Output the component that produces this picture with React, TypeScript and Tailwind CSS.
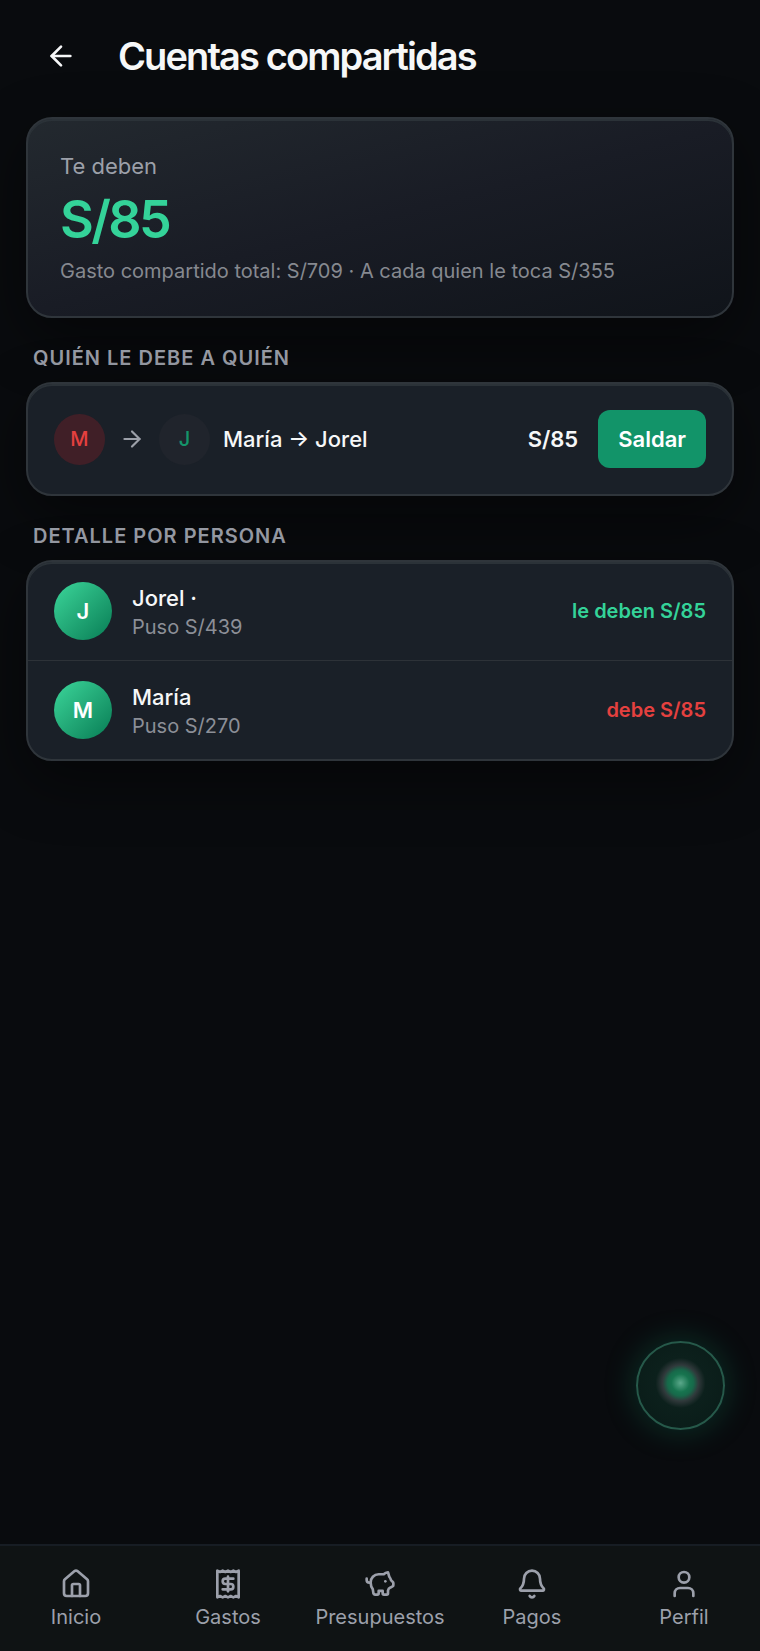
import React from "react";
import { ArrowLeft, ArrowRight, Bell, House, User } from "lucide-react";
import type { LucideIcon } from "lucide-react";

interface Person {
  name: string;
  initial: string;
  paid: string;
  status: string;
  owed: boolean;
}

interface IconProps {
  size?: number;
}

interface NavItem {
  label: string;
  icon: LucideIcon | React.ComponentType<IconProps>;
}

const people: Person[] = [
  {
    name: "Jorel ·",
    initial: "J",
    paid: "Puso S/439",
    status: "le deben S/85",
    owed: true,
  },
  {
    name: "María",
    initial: "M",
    paid: "Puso S/270",
    status: "debe S/85",
    owed: false,
  },
];

function ReceiptIcon({ size = 24 }: IconProps) {
  return (
    <svg
      width={size}
      height={size}
      viewBox="0 0 24 24"
      fill="none"
      stroke="currentColor"
      strokeWidth="2"
      strokeLinecap="round"
      strokeLinejoin="round"
      aria-hidden="true"
    >
      <path d="M4 2v20l2-1 2 1 2-1 2 1 2-1 2 1 2-1 2 1V2l-2 1-2-1-2 1-2-1-2 1-2-1-2 1Z" />
      <path d="M16 8h-6a2 2 0 1 0 0 4h4a2 2 0 1 1 0 4H8" />
      <path d="M12 17.5v-11" />
    </svg>
  );
}

function PiggyIcon({ size = 24 }: IconProps) {
  return (
    <svg
      width={size}
      height={size}
      viewBox="0 0 24 24"
      fill="none"
      stroke="currentColor"
      strokeWidth="2"
      strokeLinecap="round"
      strokeLinejoin="round"
      aria-hidden="true"
    >
      <path d="M11 17.2h3V19a1 1 0 0 0 1 1h2a1 1 0 0 0 1-1v-2.2c.2-1 .8-1.7 1.8-2.1l1.6-.9c.4-.2.6-.5.6-.9v-1.6c0-.4-.2-.7-.5-.9L20.4 9.3c-.4-1-.8-1.9-1.4-2.7L18 3.2a5 5 0 0 0-3.2 1.5H11A6 6 0 0 0 5 11c0 2.2.8 3.8 1.6 5l.5 3.2c.1.5.5.8 1 .8H10a1 1 0 0 0 1-1z" />
      <path d="M16 10h.01" />
      <path d="M2 8v1a2 2 0 0 0 2 2h1" />
    </svg>
  );
}

const navItems: NavItem[] = [
  { label: "Inicio", icon: House },
  { label: "Gastos", icon: ReceiptIcon },
  { label: "Presupuestos", icon: PiggyIcon },
  { label: "Pagos", icon: Bell },
  { label: "Perfil", icon: User },
];

const cardClass =
  "rounded-[26px] border-2 border-[#2f353b] shadow-[inset_0_2px_0_#2b3238,0_20px_60px_rgba(0,0,0,0.45)]";

function SectionTitle({ children }: { children: React.ReactNode }) {
  return (
    <h2 className="px-[7px] text-[20px] leading-6 font-semibold tracking-wider text-[#989ca6] uppercase">
      {children}
    </h2>
  );
}

function PersonRow({ person }: { person: Person }) {
  return (
    <li className="flex items-center gap-5 px-[26px] py-5">
      <span className="flex size-[58px] shrink-0 items-center justify-center rounded-full bg-linear-135 from-[#34c990] from-15% to-[#0f8a5f] to-85% text-[22px] font-semibold text-white">
        {person.initial}
      </span>
      <div className="min-w-0 flex-1">
        <p className="text-[22px] leading-8 font-medium text-[#f6f7f8]">
          {person.name}
        </p>
        <p className="text-[20px] leading-[26px] text-[#8c8f97]">
          {person.paid}
        </p>
      </div>
      <span
        className={`text-[20px] font-semibold ${
          person.owed ? "text-[#34d399]" : "text-[#e5403f]"
        }`}
      >
        {person.status}
      </span>
    </li>
  );
}

function BottomNav() {
  return (
    <nav className="sticky bottom-0 grid grid-cols-5 border-t-2 border-[#171d24] bg-[#0f1314] pt-[22px] pb-5">
      {navItems.map(({ label, icon: Icon }) => (
        <a
          key={label}
          href="#"
          className="flex flex-col items-center gap-[3px] text-[#9ca0ab]"
        >
          <Icon size={32} />
          <span className="text-[20px] leading-7">{label}</span>
        </a>
      ))}
    </nav>
  );
}

export default function App() {
  return (
    <div className="flex min-h-screen flex-col bg-[#090b0e] font-['Inter','Liberation_Sans',sans-serif] text-[#f6f7f8]">
      <header className="flex h-[117px] items-center gap-7 px-8 pb-[6px]">
        <button
          type="button"
          aria-label="Volver"
          className="flex size-[58px] items-center justify-center"
        >
          <ArrowLeft size={32} />
        </button>
        <h1 className="text-[38px] leading-12 font-semibold tracking-tighter">
          Cuentas compartidas
        </h1>
      </header>

      <main className="flex flex-1 flex-col px-[26px]">
        <section
          className={`${cardClass} bg-linear-165 from-[#23292f] via-[#191c25] to-[#10141a] px-8 pt-[31px] pb-8`}
        >
          <p className="text-[22px] leading-8 text-[#9ca0a9]">Te deben</p>
          <p className="text-[52px] leading-[76px] font-semibold tracking-tighter text-[#34d399]">
            S/85
          </p>
          <p className="text-[20px] leading-[26px] text-[#868990]">
            Gasto compartido total: S/709 · A cada quien le toca S/355
          </p>
        </section>

        <div className="mt-7">
          <SectionTitle>Quién le debe a quién</SectionTitle>
        </div>
        <section
          className={`${cardClass} mt-3 flex items-center bg-[#1a2028] px-[26px] py-[26px]`}
        >
          <span className="flex size-[51px] shrink-0 items-center justify-center rounded-full bg-[#401f27] text-[20px] font-medium text-[#e5403f]">
            M
          </span>
          <ArrowRight size={26} className="mx-[14px] text-[#9ca0a9]" />
          <span className="flex size-[51px] shrink-0 items-center justify-center rounded-full bg-[#20242c] text-[20px] font-medium text-[#14946a]">
            J
          </span>
          <p className="ml-[13px] flex-1 text-[22px] font-medium">
            María → Jorel
          </p>
          <span className="text-[22px] font-semibold">S/85</span>
          <button
            type="button"
            className="ml-5 h-[58px] rounded-xl bg-[#129469] px-5 text-[22px] font-semibold text-white"
          >
            Saldar
          </button>
        </section>

        <div className="mt-7">
          <SectionTitle>Detalle por persona</SectionTitle>
        </div>
        <ul
          className={`${cardClass} mt-3 divide-y divide-[#2d3238] bg-[#1a2028]`}
        >
          {people.map((person) => (
            <PersonRow key={person.name} person={person} />
          ))}
        </ul>
      </main>

      {/* Floating assistant orb */}
      <button
        type="button"
        aria-label="Asistente"
        className="fixed right-[35px] bottom-[221px] size-[89px] rounded-full border-2 border-[#26594a] bg-[radial-gradient(circle_at_50%_47%,#5aa88a_0,#17744f_9px,#17694a_13px,#30393b_18px,#0c201c_25px,#091a17_100%)] shadow-[0_0_32px_rgba(16,148,105,0.3)]"
      />

      <BottomNav />
    </div>
  );
}
